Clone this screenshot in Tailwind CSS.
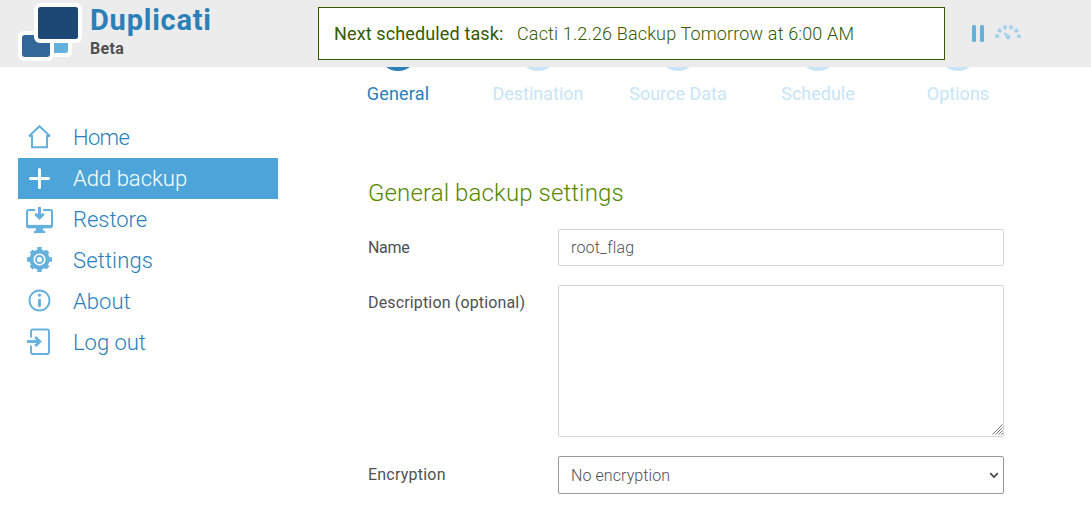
<!DOCTYPE html>
<html lang="en">
<head>
<meta charset="utf-8">
<title>Duplicati</title>
<script src="https://cdn.jsdelivr.net/npm/@tailwindcss/browser@4"></script>
</head>
<body class="h-[527px] overflow-hidden bg-white font-[Roboto,'Open_Sans',sans-serif] text-[#4f5052]">
<header class="flex h-[67px] bg-[#ececec]">
  <div class="flex w-[318px] pl-[18px]">
    <svg class="h-[64px] w-[66px] shrink-0" viewBox="18 0 66 64">
      <rect x="46" y="31" width="26" height="26" rx="5" fill="#fff"/>
      <rect x="46" y="35" width="22" height="18" rx="2.5" fill="#65b1de"/>
      <rect x="18" y="31" width="36" height="30" rx="6" fill="#fff"/>
      <rect x="22" y="35" width="28" height="22" rx="3" fill="#336699"/>
      <rect x="34" y="3" width="48" height="40" rx="6" fill="#fff"/>
      <rect x="38" y="7" width="40" height="32" rx="2.5" fill="#1d4775"/>
    </svg>
    <div class="pl-[6px] pt-[1px]">
      <h1 class="h-[38px] text-[29px]/[38px] font-bold tracking-[0.77px] text-[#2a80b7]">Duplicati</h1>
      <p class="text-[16px]/[19px] font-bold tracking-[0.35px]">Beta</p>
    </div>
  </div>
  <div class="mt-[7px] flex h-[53px] w-[627px] items-center gap-[14px] border border-[#365900] bg-white pl-[15px] text-[18px] text-[#365900]">
    <span class="w-[169px] whitespace-nowrap font-normal tracking-[0.13px]">Next scheduled task:</span>
    <span class="font-light tracking-[0.15px]">Cacti 1.2.26 Backup Tomorrow at 6:00 AM</span>
  </div>
  <div class="flex pl-[27px] pt-[25px]">
    <svg class="h-[18px] w-[12px]" viewBox="0 0 12 18" fill="#65b1de"><rect width="4" height="17" rx="1.5"/><rect x="8" width="4" height="17" rx="1.5"/></svg>
    <svg class="ml-[11px] h-[18px] w-[26px]" viewBox="0 0 26 18">
      <path d="M2 13a11 11 0 0 1 22 0" fill="none" stroke="#a5d2ec" stroke-width="4" stroke-dasharray="3.6 2.56" />
      <path d="M8.5 6.8 15 10.4a2.5 2.5 0 1 1-4.2 2.7Z" fill="#a5d2ec"/>
    </svg>
  </div>
</header>
<div class="flex">
  <nav class="ml-[18px] mt-[50px] w-[260px] shrink-0 text-[22px] font-light text-[#2a80b7]">
    <a class="flex h-[41px] items-center gap-[13px] pl-[4px]">
      <svg class="size-[38px]" viewBox="0 1 38 38" fill="none" stroke="#65b1de" stroke-width="2"><path d="M7 18.3 17.5 8.2 28 18.3M7 17.9H10V29.2H25V17.9H28"/></svg>
      <span class="tracking-[-0.65px]">Home</span>
    </a>
    <a class="flex h-[41px] items-center gap-[13px] bg-[#4ca4d8] pl-[4px] text-white">
      <svg class="size-[38px]" viewBox="0 1 38 38" fill="none" stroke="#fff" stroke-width="3" stroke-linecap="round"><path d="M17.5 10.5V28.5M8.5 19.5H26.5"/></svg>
      <span class="tracking-[0.02px]">Add backup</span>
    </a>
    <a class="flex h-[41px] items-center gap-[13px] pl-[4px]">
      <svg class="size-[38px]" viewBox="0 1 38 38" fill="none" stroke="#65b1de"><path d="M13.3 10H6.5Q5 10 5 11.5V25.5Q5 27.2 6.5 27.2H28.5Q30 27.2 30 25.5V11.5Q30 10 28.5 10H21.2" stroke-width="2"/><path d="M5.5 26.5H29.5" stroke-width="3.2"/><path d="M14 28H21V30.2L23.3 31.2V33H12V31.2L14 30.2Z" fill="#65b1de" stroke="none"/><path d="M17.5 7V17" stroke-width="3"/><path d="M13.3 13.8 17.5 18 21.7 13.8" stroke-width="3"/></svg>
      <span class="tracking-[-0.03px]">Restore</span>
    </a>
    <a class="flex h-[41px] items-center gap-[13px] pl-[4px]">
      <svg class="size-[38px]" viewBox="0 0.5 38 38" fill="none" stroke="#65b1de"><circle cx="17.5" cy="18" r="8.1" stroke-width="4"/><path d="M17.5 5.5V9M17.5 27V30.5M5 18H8.5M26.5 18H30M9.1 9.6 11.3 11.8M23.7 24.2 25.9 26.4M9.1 26.4 11.3 24.2M23.7 11.8 25.9 9.6" stroke-width="4.4"/><circle cx="17.5" cy="18" r="3.5" stroke-width="1.9"/></svg>
      <span class="tracking-[0.13px]">Settings</span>
    </a>
    <a class="flex h-[41px] items-center gap-[13px] pl-[4px]">
      <svg class="size-[38px]" viewBox="0 1 38 38" fill="none" stroke="#65b1de"><circle cx="17.5" cy="18.5" r="10" stroke-width="1.9"/><path d="M17.5 18.3V23.7" stroke-width="2.9" stroke-linecap="round"/><circle cx="17.5" cy="13.2" r="1.6" fill="#65b1de" stroke="none"/></svg>
      <span class="tracking-[0.05px]">About</span>
    </a>
    <a class="flex h-[41px] items-center gap-[13px] pl-[4px]">
      <svg class="size-[38px]" viewBox="0 1 38 38" fill="none" stroke="#65b1de"><path d="M9 14.5V8.5Q9 6.5 11 6.5H25Q27 6.5 27 8.5V29Q27 31 25 31H11Q9 31 9 29V22.5" stroke-width="1.9"/><path d="M5 18.5H17" stroke-width="2.9"/><path d="M13.2 14 17.8 18.5 13.2 23" stroke-width="2.8"/></svg>
      <span class="tracking-[-0.02px]">Log out</span>
    </a>
  </nav>
  <main class="ml-[50px] w-[700px]">
    <ol class="grid grid-cols-5 text-center text-[18px]/[22px] text-[#c7e5f6]">
      <li class="flex flex-col items-center text-[#2a80b7]"><div class="h-[4px] w-[40px] overflow-hidden"><div class="-mt-[36px] size-[40px] rounded-full bg-[#2a80b7]"></div></div><span class="mt-[12px] tracking-[0.2px]">General</span></li>
      <li class="flex flex-col items-center"><div class="h-[4px] w-[40px] overflow-hidden"><div class="-mt-[36px] size-[40px] rounded-full bg-[#c7e5f6]"></div></div><span class="mt-[12px]">Destination</span></li>
      <li class="flex flex-col items-center"><div class="h-[4px] w-[40px] overflow-hidden"><div class="-mt-[36px] size-[40px] rounded-full bg-[#c7e5f6]"></div></div><span class="mt-[12px]">Source Data</span></li>
      <li class="flex flex-col items-center"><div class="h-[4px] w-[40px] overflow-hidden"><div class="-mt-[36px] size-[40px] rounded-full bg-[#c7e5f6]"></div></div><span class="mt-[12px]">Schedule</span></li>
      <li class="flex flex-col items-center"><div class="h-[4px] w-[40px] overflow-hidden"><div class="-mt-[36px] size-[40px] rounded-full bg-[#c7e5f6]"></div></div><span class="mt-[12px]">Options</span></li>
    </ol>
    <form class="ml-[40px] w-[636px] text-[16px]">
      <h2 class="mt-[72px] h-[32px] text-[24px]/[32px] font-light tracking-[0.12px] text-[#568700]">General backup settings</h2>
      <div class="mt-[20px] flex h-[37px]">
        <label class="w-[190px] pt-[7px] tracking-[-0.3px]">Name</label>
        <input class="w-[446px] rounded-[2px] border border-[#d5d5d5] px-[12px] font-light tracking-[0.2px]" value="root_flag">
      </div>
      <div class="mt-[19px] flex h-[152px]">
        <label class="w-[190px] pt-[6px] tracking-[0.15px]">Description (optional)</label>
        <div class="relative h-[152px] w-[446px]">
          <textarea class="h-full w-full resize-none rounded-[2px] border border-[#d5d5d5]"></textarea>
          <svg class="pointer-events-none absolute bottom-[2px] right-[1px] size-[11px]" viewBox="0 0 11 11" fill="none" stroke="#777" stroke-width="1"><path d="M.5 10.5 10.5 .5M3.5 10.5 10.5 3.5M6.5 10.5 10.5 6.5M9 10.8 10.8 9"/></svg>
        </div>
      </div>
      <div class="mt-[19px] flex h-[38px]">
        <label class="w-[190px] pt-[7px] tracking-[0.22px]">Encryption</label>
        <div class="relative w-[446px]">
          <select class="h-full w-full appearance-none rounded-[2px] border border-[#999] px-[12px] pt-[2px] font-light tracking-[0.08px]"><option>No encryption</option></select>
          <svg class="pointer-events-none absolute right-[5px] top-[16px] h-[7px] w-[10px]" viewBox="0 0 10 7" fill="none" stroke="#444" stroke-width="1.7"><path d="M1.2 1.2 5 5 8.8 1.2"/></svg>
        </div>
      </div>
    </form>
  </main>
</div>
</body></html>
